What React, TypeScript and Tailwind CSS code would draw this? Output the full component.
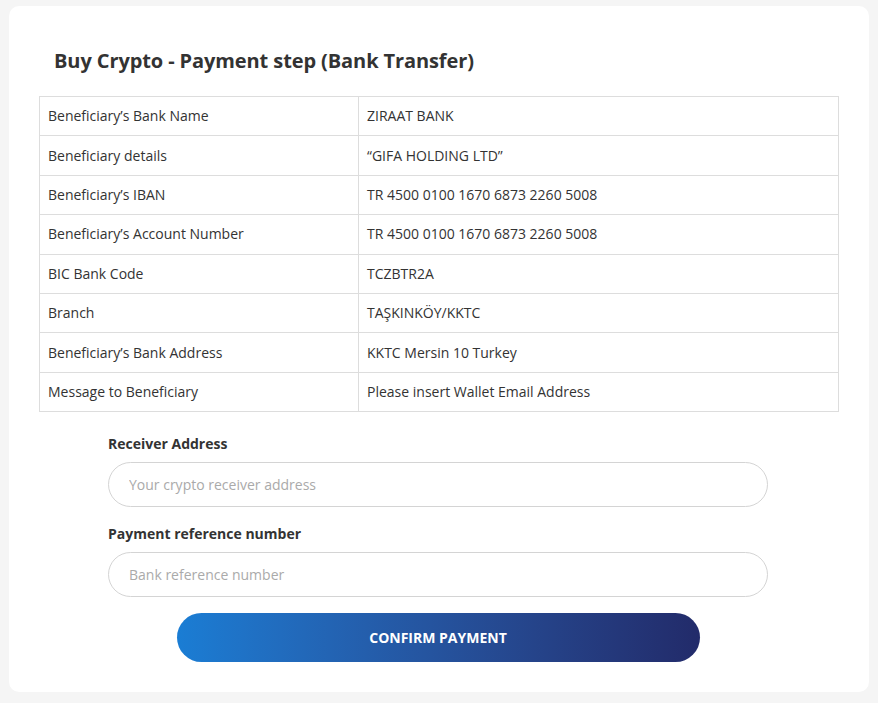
const rows: [string, string][] = [
  ["Beneficiary’s Bank Name", "ZIRAAT BANK"],
  ["Beneficiary details", "“GIFA HOLDING LTD”"],
  ["Beneficiary’s IBAN", "TR 4500 0100 1670 6873 2260 5008"],
  ["Beneficiary’s Account Number", "TR 4500 0100 1670 6873 2260 5008"],
  ["BIC Bank Code", "TCZBTR2A"],
  ["Branch", "TAŞKINKÖY/KKTC"],
  ["Beneficiary’s Bank Address", "KKTC Mersin 10 Turkey"],
  ["Message to Beneficiary", "Please insert Wallet Email Address"],
];

function Field({ label, placeholder }: { label: string; placeholder: string }) {
  return (
    <div className="flex flex-col gap-2">
      <label className="text-sm font-bold leading-5 text-[#333]">{label}</label>
      <input
        type="text"
        placeholder={placeholder}
        className="h-[45px] w-full rounded-full border border-[#d4d4d4] bg-white px-5 text-sm text-[#333] outline-none placeholder:text-[#aaa]"
      />
    </div>
  );
}

export default function App() {
  return (
    <div className="min-h-[703px] bg-[#f5f5f5] px-[9px] pt-[6px] pb-[10px] font-['Open_Sans',sans-serif]">
      <div className="rounded-[10px] bg-white px-[30px] pt-[41px] pb-[30px]">
        <h1 className="pl-[15px] text-xl font-bold leading-7 tracking-[-0.1px] text-[#333]">
          Buy Crypto - Payment step (Bank Transfer)
        </h1>
        <table className="mt-[21px] w-full border-collapse text-sm text-[#333]">
          <tbody>
            {rows.map(([k, v]) => (
              <tr key={k} className="h-[39.4px]">
                <td className="w-[319px] border border-[#ddd] px-2 leading-5">{k}</td>
                <td className="border border-[#ddd] px-2 leading-5">{v}</td>
              </tr>
            ))}
          </tbody>
        </table>
        <div className="ml-[69px] mt-[22px] flex w-[660px] flex-col">
          <Field label="Receiver Address" placeholder="Your crypto receiver address" />
          <div className="mt-[17px]">
            <Field label="Payment reference number" placeholder="Bank reference number" />
          </div>
          <button className="mx-auto mt-4 h-[49px] w-[523px] rounded-full bg-gradient-to-r from-[#1a7dd4] to-[#222b6a] text-sm font-bold text-white">
            CONFIRM PAYMENT
          </button>
        </div>
      </div>
    </div>
  );
}
